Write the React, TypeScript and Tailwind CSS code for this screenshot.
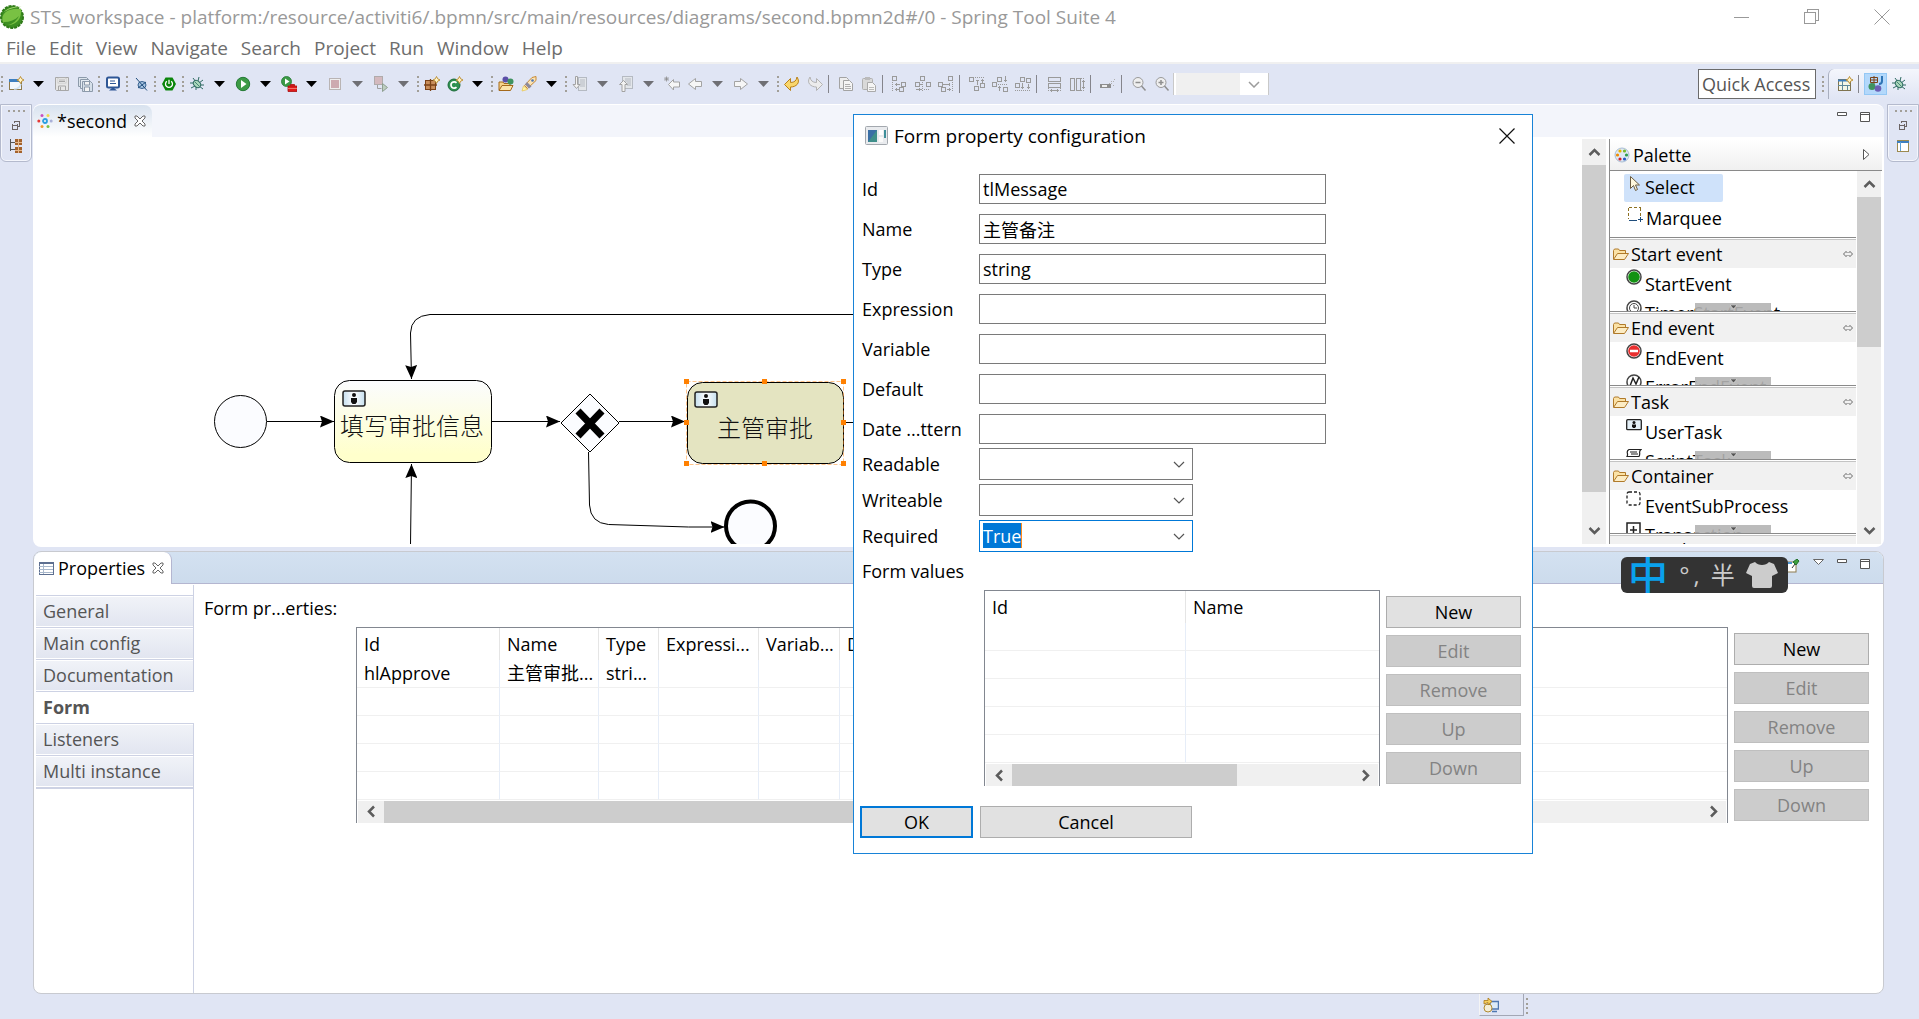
import type { ReactNode } from 'react';
import clsx from 'clsx';

const INK = '#9a9a9a';

interface IconProps {
  children: ReactNode;
  crisp?: boolean;
  className?: string;
}

function Icon({ children, crisp, className }: IconProps) {
  return (
    <svg
      viewBox="0 0 16 16"
      fill="none"
      shapeRendering={crisp ? 'crispEdges' : 'auto'}
      className={clsx('h-4 w-4 shrink-0', className)}
    >
      {children}
    </svg>
  );
}

const sparkle = <path d="M12.5 0.5l1.2 2.3 2.3 1.2-2.3 1.2-1.2 2.3-1.2-2.3L9 4l2.3-1.2z" fill="#fff3c4" stroke="#b8892b" strokeWidth="0.9" />;

const bug = (
  <>
    <path d="M4 2l3 4M10 1L9 5M1 7h4M2 12l4-2M7 14v-3M15 9h-4M14 13l-4-3M14 4l-4 3" stroke="#2f6b62" />
    <ellipse cx="8" cy="8" rx="4" ry="3" transform="rotate(40 8 8)" fill="#a9d8bb" stroke="#2f6b62" />
    <path d="M6 6l4 4" stroke="#2f6b62" strokeWidth="0.8" />
  </>
);

const box = (x: number, y: number, w = 5, h = 5) => (
  <rect x={x + 0.5} y={y + 0.5} width={w - 1} height={h - 1} stroke={INK} />
);

const icons: Record<string, ReactNode> = {
  New: (
    <Icon>
      <rect x="1.5" y="3.5" width="12" height="10" fill="#f2f8fd" stroke="#8d7a4c" />
      <rect x="1" y="3" width="10" height="3" fill="#3d7fc0" />
      <path d="M6 13c4 0 6-2 7-5" stroke="#cfe3f5" strokeWidth="1.5" />
      {sparkle}
    </Icon>
  ),
  Save: (
    <Icon>
      <path d="M1.5 1.5h13v13h-12l-1-1z" fill="#e6e6e6" stroke="#a7a7a7" />
      <rect x="4" y="2" width="8" height="5" fill="#f7f7f7" stroke="#bdbdbd" strokeWidth="0.7" />
      <path d="M4.5 14v-4h7v4M6.5 14v-3M5 4h6M5 5.500h6" stroke="#a7a7a7" />
    </Icon>
  ),
  'Save All': (
    <Icon>
      <path d="M1.500 1.500h8l2 2v7h-10z" fill="#dce4ec" stroke="#8c9aaa" />
      <path d="M3.500 3.500h8l2 2v7h-10z" fill="#e4ebf2" stroke="#8c9aaa" />
      <path d="M5.500 5.500h8l2 2v8h-10z" fill="#d5dfe9" stroke="#8c9aaa" />
      <path d="M7.500 6v3h5V6M7.500 15v-4h5v4" fill="#f4f4f4" stroke="#8c9aaa" />
    </Icon>
  ),
  Console: (
    <Icon>
      <rect x="2" y="1.500" width="12" height="10" rx="1.500" fill="#fff" stroke="#2e5796" strokeWidth="2" />
      <path d="M5 5h5M5 7.500h6" stroke="#2e5796" />
      <path d="M7 12h2l3 2.500H4z" fill="#2e5796" />
    </Icon>
  ),
  'Skip Breakpoints': (
    <Icon>
      <ellipse cx="9" cy="9" rx="4" ry="3.500" fill="#a8c5e2" stroke="#35618f" />
      <path d="M3 2l11 12.500M5 12l8-6" stroke="#1f4d7c" />
    </Icon>
  ),
  'Boot Dashboard': (
    <Icon>
      <path d="M4.500 1.500h7L15 8l-3.500 6.500h-7L1 8z" fill="#0b860b" />
      <path d="M5.800 5.200a3.500 3.500 0 104.400 0M8 3.800V8" stroke="#fff" strokeWidth="1.300" />
    </Icon>
  ),
  Debug: <Icon>{bug}</Icon>,
  Run: (
    <Icon>
      <circle cx="8" cy="8" r="6.700" fill="#3c9a45" stroke="#237a35" />
      <path d="M6 4l5.500 4L6 12z" fill="#fff" />
    </Icon>
  ),
  'External Tools': (
    <Icon>
      <circle cx="5.500" cy="5.500" r="5" fill="#3c9a45" stroke="#237a35" strokeWidth="0.800" />
      <path d="M4 2.500l4.500 3L4 8.500z" fill="#fff" />
      <path d="M7 10h9v5.500H7zM9.500 10V8.500h4V10" fill="#e01b1b" stroke="#a80f0f" strokeWidth="0.800" />
      <path d="M7 12.500h9" stroke="#ffb0a0" strokeWidth="0.600" />
    </Icon>
  ),
  Stop: (
    <Icon>
      <rect x="2.500" y="2.500" width="11" height="11" fill="#eee" stroke="#b9b4b4" />
      <rect x="4" y="4" width="8" height="8" fill="#cdaab0" />
    </Icon>
  ),
  Relaunch: (
    <Icon>
      <rect x="1.500" y="0.500" width="8" height="8" fill="#d4b9be" stroke="#b0abab" />
      <path d="M4.500 9v3.500h4" stroke="#a0a0a0" />
      <path d="M9.500 7.500l5 4-5 4z" fill="#bccdbf" stroke="#8f9f91" />
    </Icon>
  ),
  'New Package': (
    <Icon>
      <rect x="1.500" y="4.500" width="10" height="9" fill="#c98e5b" stroke="#7b4318" />
      <path d="M6.500 3v12M0 9h13" stroke="#7b4318" strokeWidth="1.300" />
      {sparkle}
    </Icon>
  ),
  'New Class': (
    <Icon>
      <circle cx="7" cy="9" r="6" fill="#2f9150" stroke="#1c6b39" />
      <path d="M9.500 6.800a3.200 3.200 0 100 4.400" stroke="#fff" strokeWidth="1.700" />
      {sparkle}
    </Icon>
  ),
  'Open Type': (
    <Icon>
      <path d="M1 14V6h4l1 1.500h6V14z" fill="#f8d58b" stroke="#a4691b" />
      <circle cx="7.500" cy="3.500" r="3" fill="#5b4fa8" />
      <circle cx="12.500" cy="5.500" r="3" fill="#3f9360" />
      <path d="M1 14.500l3-5h11l-2.500 5z" fill="#fce4a8" stroke="#a4691b" />
    </Icon>
  ),
  Search: (
    <Icon>
      <path d="M1 15l1.500-5 4 3.500z" fill="#fff6a8" stroke="#e8c65a" strokeWidth="0.800" />
      <path d="M3.500 9.500L11 1.500l4-1 0 4-8.500 8z" fill="#fbe3b5" stroke="#c78a35" />
      <path d="M4 8.500l4 4 2.500-2-4.500-4.500z" fill="#8c8a9c" />
      <circle cx="11.500" cy="4.500" r="1.300" fill="#4d74b0" />
    </Icon>
  ),
  'Next Annotation': (
    <Icon>
      <rect x="6.500" y="1.500" width="8" height="13" fill="#e3e6ea" stroke="#b5bac2" />
      <path d="M8 4h5M8 6h5M8 8h5M8 10h5" stroke="#b5bac2" />
      <path d="M3.500 0.500h2v8h2.500l-3.500 4-3.500-4h2.500z" fill="#f3f3f3" stroke="#a3a3a3" />
    </Icon>
  ),
  'Previous Annotation': (
    <Icon>
      <rect x="4.500" y="0.500" width="10" height="12" fill="#e3e6ea" stroke="#b5bac2" />
      <path d="M7 3h6M7 5h6M9 7h4M9 9h4" stroke="#b5bac2" />
      <path d="M4 15.500v-7H1.500l4-4 4 4H7v7z" fill="#f3f3f3" stroke="#a3a3a3" />
    </Icon>
  ),
  'Last Edit Location': (
    <Icon>
      <path d="M15.500 6v5h-6v3l-5-5.500 5-5v2.500z" fill="#f6f6f6" stroke="#a3a3a3" />
      <path d="M2.500 0.500v5M0 3h5M0.800 1.200l3.500 3.500M4.300 1.200L0.800 4.700" stroke="#8b8b8b" strokeWidth="0.800" />
    </Icon>
  ),
  Back: <Icon><path d="M14.500 5.500v5h-6v3L1.500 8l7-5.500v3z" fill="#f6f6f6" stroke="#a3a3a3" /></Icon>,
  Forward: <Icon><path d="M1.500 5.500v5h6v3l7-5.500-7-5.500v3z" fill="#f6f6f6" stroke="#a3a3a3" /></Icon>,
  Undo: <Icon><path d="M0.500 8.500l6-6v4c4 0 6-2 6.500-5.500 4 6-1 10-6.500 10v3.500z" fill="#f9d66c" stroke="#b98018" /></Icon>,
  Redo: <Icon><path d="M15.500 8.500l-6-6v4c-4 0-6-2-6.500-5.500-4 6 1 10 6.500 10v3.500z" fill="#ececec" stroke="#b3b3b3" /></Icon>,
  Copy: (
    <Icon>
      <path d="M1.500 1.500h7l2 2v9h-9z" fill="#eee" stroke="#a3a3a3" />
      <path d="M5.500 4.500h6l3 3v7h-9z" fill="#f5f5f5" stroke="#a3a3a3" />
      <path d="M7 8.500h5M7 10.500h6M7 12.500h6" stroke="#b0b0b0" />
    </Icon>
  ),
  Paste: (
    <Icon>
      <rect x="1.500" y="2.500" width="10" height="11" rx="1" fill="#d9d9d9" stroke="#b0b0b0" />
      <rect x="4" y="1" width="5" height="3" fill="#bbb" />
      <path d="M6.500 6.500h5l3 3v6h-8z" fill="#f5f5f5" stroke="#aaa" />
      <path d="M8 11.500h5M8 13.500h5" stroke="#bbb" />
    </Icon>
  ),
  'Align Left': <Icon crisp>{box(0, 0)}{box(9, 6)}{box(7, 11)}<path d="M0.500 6v10" stroke={INK} strokeDasharray="1 1" /><path d="M3 8.500h5M3 13.500h4" stroke={INK} /><path d="M4 7v3M4 12v3" stroke={INK} /></Icon>,
  'Align Center': <Icon crisp>{box(5, 0)}{box(0, 6)}{box(11, 6)}<path d="M7.500 6v10M9 13.500h6" stroke={INK} strokeDasharray="1 1" /><path d="M1 13.500h6M5 8.500h2M4.500 12v3" stroke={INK} /></Icon>,
  'Align Right': <Icon crisp>{box(10, 0)}{box(0, 6)}{box(3, 11)}<path d="M14.500 6v10" stroke={INK} strokeDasharray="1 1" /><path d="M5 8.500h7M9 13.500h4M11.500 7v3M11.500 12v3" stroke={INK} /></Icon>,
  'Align Top': <Icon crisp>{box(0, 1)}{box(5, 10)}{box(11, 7)}<path d="M6 1.500h10" stroke={INK} strokeDasharray="1 1" /><path d="M8.500 4v5M13.500 3v4M7 4.500h3M12 4.500h3" stroke={INK} /></Icon>,
  'Align Middle': <Icon crisp>{box(5, 1)}{box(0, 6)}{box(11, 11)}<path d="M6 8.500h10" stroke={INK} strokeDasharray="1 1" /><path d="M7.500 10v5M13.500 0v6M6 11.500h3M12 4.500h3" stroke={INK} /></Icon>,
  'Align Bottom': <Icon crisp>{box(5, 1)}{box(11, 2)}{box(0, 7)}<path d="M0 14.500h16" stroke={INK} strokeDasharray="1 1" /><path d="M7.500 7v6M13.500 8v5M6 11.500h3M12 11.500h3" stroke={INK} /></Icon>,
  'Match Width': <Icon crisp>{box(2, 1, 13, 5)}{box(2, 7, 13, 5)}<path d="M2.500 12v4M14.500 12v4" stroke={INK} strokeDasharray="1 1" /><path d="M4 14.500h9M5.500 13v3M11.500 13v3" stroke={INK} /></Icon>,
  'Match Height': <Icon crisp>{box(1, 2, 5, 13)}{box(7, 2, 5, 13)}<path d="M12 2.500h4M12 14.500h4" stroke={INK} strokeDasharray="1 1" /><path d="M14.500 4v9M13 5.500h3M13 11.500h3" stroke={INK} /></Icon>,
  Eraser: (
    <Icon crisp>
      <path d="M0 8h11v4H0z" fill="#8d8d8d" />
      <path d="M2 9h5v2H2z" fill="#eee" />
      <path d="M9 7.500h4M11 5.500h3M14 3.500h2M13 9.500h2" stroke="#b0b0b0" strokeDasharray="1 1" />
    </Icon>
  ),
  'Zoom Out': <Icon><circle cx="7" cy="6.500" r="5" fill="#efefef" stroke={INK} /><path d="M4.500 6.500h5M10.500 10l4 4.500" stroke="#8f8f8f" strokeWidth="1.500" /></Icon>,
  'Zoom In': <Icon><circle cx="7" cy="6.500" r="5" fill="#efefef" stroke={INK} /><path d="M4.500 6.500h5M7 4v5M10.500 10l4 4.500" stroke="#8f8f8f" strokeWidth="1.500" /></Icon>,
};

// '|' is a grip, '/' a separator, 'v' a drop-down arrow and '-' a disabled one
const toolbar = [
  'New', 'v', 'Save', 'Save All', '|', 'Console', '|', 'Skip Breakpoints', '|', 'Boot Dashboard', '|',
  'Debug', 'v', 'Run', 'v', 'External Tools', 'v', 'Stop', '-', 'Relaunch', '-', '|',
  'New Package', 'New Class', 'v', '|', 'Open Type', 'Search', 'v', '|',
  'Next Annotation', '-', 'Previous Annotation', '-', 'Last Edit Location', 'Back', '-', 'Forward', '-', '|',
  'Undo', 'Redo', '/', 'Copy', 'Paste', '/', 'Align Left', 'Align Center', 'Align Right', '/',
  'Align Top', 'Align Middle', 'Align Bottom', '/', 'Match Width', 'Match Height', '/', 'Eraser', '/',
  'Zoom Out', 'Zoom In',
];

function Grip({ narrow }: { narrow?: boolean }) {
  return (
    <span className={clsx('flex h-4 shrink-0 flex-col items-center justify-between', narrow ? 'w-1' : 'w-[5px]')}>
      {[0, 1, 2, 3].map((i) => (
        <span key={i} className="h-[2px] w-[2px] bg-[#a29f98]" />
      ))}
    </span>
  );
}

function ToolItem({ name }: { name: string }) {
  if (name === '|') return <Grip />;
  if (name === '/') return <span className="mr-[5px] ml-[2px] h-[18px] w-px shrink-0 bg-[#85858c]" />;
  if (name === 'v' || name === '-') {
    return (
      <button aria-label="More" className="flex h-6 w-[23px] shrink-0 items-center justify-center">
        <svg viewBox="0 0 11 6" className="h-[6px] w-[11px]">
          <path d="M0 0h11L5.500 6z" fill={name === 'v' ? '#000' : '#6f6f74'} />
        </svg>
      </button>
    );
  }
  return (
    <button aria-label={name} className="flex h-6 w-[23px] shrink-0 items-center justify-center">
      {icons[name]}
    </button>
  );
}

function TitleBar() {
  return (
    <header className="flex h-[34px] shrink-0 items-center">
      <svg viewBox="0 0 26 26" className="h-[26px] w-[26px]">
        <circle cx="12" cy="13" r="11" fill="#3d8f22" stroke="#2f7a18" strokeWidth="2" strokeDasharray="3 1" />
        <path d="M3 19C0 9 8 4 21 5c1 9-4 16-13 16 5-1 9-5 11-9-4 4-9 6-15 6z" fill="#79c143" />
        <path d="M4 8c4-5 12-6 18-5-5 0-12 1-18 5z" fill="#a5d96f" />
      </svg>
      <h1 className="ml-1 text-[19px] text-[#999]">
        STS_workspace - platform:/resource/activiti6/.bpmn/src/main/resources/diagrams/second.bpmn2d#/0 - Spring Tool Suite 4
      </h1>
      <div className="ml-auto flex items-center gap-[54px] pr-[29px]">
        <button aria-label="Minimize"><Icon crisp><path d="M0 8.500h15" stroke="#999" /></Icon></button>
        <button aria-label="Restore"><Icon crisp><path d="M0.500 3.500h11v11H0.500zM3.500 3V0.500h11v11H12" stroke="#999" /></Icon></button>
        <button aria-label="Close"><Icon><path d="M0.500 0.500l15 15M15.500 0.500l-15 15" stroke="#999" /></Icon></button>
      </div>
    </header>
  );
}

function MenuBar() {
  const menus = ['File', 'Edit', 'View', 'Navigate', 'Search', 'Project', 'Run', 'Window', 'Help'];
  return (
    <nav className="flex h-7 shrink-0 items-center gap-[13px] pl-[6px] text-[19px] text-[#6d6d6d]">
      {menus.map((m) => (
        <button key={m}>{m}</button>
      ))}
    </nav>
  );
}

function Toolbar() {
  return (
    <div className="flex h-[42px] shrink-0 items-center border-t-2 border-[#f0f0f0]">
      <Grip narrow />
      {toolbar.map((name, i) => (
        <ToolItem key={i} name={name} />
      ))}
      <div className="relative h-[22px] w-24 border-x border-[#c9c9c9] bg-white">
        <select aria-label="Zoom" disabled className="mx-[2px] h-full w-16 appearance-none bg-[#f0f0f0]" />
        <svg viewBox="0 0 12 7" className="absolute top-2 right-2 h-[7px] w-3" fill="none">
          <path d="M1 1l5 5 5-5" stroke="#9c9c9c" strokeWidth="1.500" />
        </svg>
      </div>
      <div className="ml-auto flex items-center">
        <input
          aria-label="Quick Access"
          placeholder="Quick Access"
          className="mr-1 h-[30px] w-[118px] border border-[#6b6b6b] bg-white px-[3px] outline-none placeholder:text-[#555]"
        />
        <Grip />
        <div className="ml-[3px] flex h-[30px] w-[91px] items-center rounded-tl-md border-l border-[#a9afc0] bg-gradient-to-b from-[#f4f6fc] to-[#e0e5f4] pl-2">
          <button aria-label="Open Perspective">
            <Icon>
              <rect x="1.500" y="3.500" width="12" height="11" fill="#f5f7e8" stroke="#7f7450" />
              <path d="M1 4.500h10" stroke="#3d7fc0" strokeWidth="2" />
              <path d="M5.500 5v9M1 9.500h12M10.500 9v5" stroke="#5f8a9c" />
              {sparkle}
            </Icon>
          </button>
          <span className="mx-[5px] h-[18px] w-px bg-[#85858c]" />
          <button aria-label="Java EE" className="flex h-[22px] w-[23px] items-center justify-center border border-[#94c8f5] bg-[#b3d8fb]">
            <Icon>
              <path d="M2.500 1.500h7v5h-7zM6 0v8M2 4h8" stroke="#7b4318" />
              <path d="M14 0v5c0 2-1 3-3 3" stroke="#2f74b5" strokeWidth="2" />
              <circle cx="4" cy="10.500" r="3.500" fill="#3f9360" />
              <circle cx="10" cy="12.500" r="3.300" fill="#6b5fb5" />
            </Icon>
          </button>
          <button aria-label="Debug perspective" className="ml-1"><Icon>{bug}</Icon></button>
        </div>
      </div>
    </div>
  );
}

function TrimStack({ children }: { children: ReactNode }) {
  return (
    <aside className="flex h-[58px] w-8 shrink-0 flex-col items-center rounded-b-md border border-[#b4bacd] shadow-[inset_0_0_0_1px_#f4f6fc]">
      <span className="mt-[5px] flex gap-[3px]">
        {[0, 1, 2, 3].map((i) => (
          <span key={i} className="h-[2px] w-[2px] bg-[#a29f98]" />
        ))}
      </span>
      <button aria-label="Restore view" className="mt-2">
        <svg viewBox="0 0 10 10" className="h-[10px] w-[10px]" fill="none" shapeRendering="crispEdges">
          <path d="M3 1.500h6M3.500 3V1M8.500 1v5H7M1 5h6M1.500 4v5h5V4" stroke="#6b6464" />
        </svg>
      </button>
      <button aria-label="Show view" className="mt-2">{children}</button>
    </aside>
  );
}

function ViewButtons() {
  return (
    <>
      <button aria-label="Minimize view">
        <svg viewBox="0 0 10 10" className="h-[10px] w-[10px]" fill="none"><path d="M0.500 0.500h9v3h-9z" fill="#fff" stroke="#555" /></svg>
      </button>
      <button aria-label="Maximize view">
        <svg viewBox="0 0 10 10" className="h-[10px] w-[10px]" fill="none"><path d="M0.500 0.500h9v9h-9zM0 2.500h10" fill="#fff" stroke="#555" /></svg>
      </button>
    </>
  );
}

function CloseTab() {
  return (
    <button aria-label="Close tab">
      <svg viewBox="0 0 12 12" className="h-3 w-3" fill="none">
        <path d="M1 1h2l3 3 3-3h2v2L8 6l3 3v2H9L6 8l-3 3H1V9l3-3-3-3z" fill="#fff" stroke="#666" />
      </svg>
    </button>
  );
}

const arrows = { up: 'M2 8l4-4 4 4', down: 'M2 4l4 4 4-4', left: 'M8 2L4 6l4 4', right: 'M4 2l4 4-4 4' };

function ScrollArrow({ dir }: { dir: keyof typeof arrows }) {
  const vertical = dir === 'up' || dir === 'down';
  return (
    <button
      aria-label={`Scroll ${dir}`}
      className={clsx('flex shrink-0 items-center justify-center', vertical ? 'h-[26px] w-6' : 'h-[22px] w-[26px]')}
    >
      <svg viewBox="0 0 12 12" className="h-[15px] w-[15px]" fill="none">
        <path d={arrows[dir]} stroke="#5c5c5c" strokeWidth="2" />
      </svg>
    </button>
  );
}

function VScroll({ thumb }: { thumb: string }) {
  return (
    <div className="flex w-6 shrink-0 flex-col bg-[#f0f0f0]">
      <ScrollArrow dir="up" />
      <div className="flex-1">
        <div className={clsx('w-6 bg-[#cdcdcd]', thumb)} />
      </div>
      <ScrollArrow dir="down" />
    </div>
  );
}

function HScroll({ thumb }: { thumb: string }) {
  return (
    <div className="mx-px mt-px flex h-[22px] items-center bg-[#f0f0f0]">
      <ScrollArrow dir="left" />
      <div className="flex h-full flex-1">
        <div className={clsx('h-full bg-[#cdcdcd]', thumb)} />
      </div>
      <ScrollArrow dir="right" />
    </div>
  );
}

const userBadge = (x: number, y: number) => (
  <g transform={`translate(${x} ${y})`}>
    <rect x="1" y="1" width="22" height="15" rx="2" fill="url(#badge)" stroke="#222" strokeWidth="1.500" />
    <circle cx="12" cy="5" r="2" fill="#111" />
    <path d="M9 8h6v4l-1.500 2h-3L9 12z" fill="#111" />
  </g>
);

function Diagram() {
  const handles = [[686, 381], [764, 381], [843, 381], [686, 422], [843, 422], [686, 463], [764, 463], [843, 463]];
  return (
    <svg className="h-full min-w-0 flex-1" fill="none">
      <defs>
        <linearGradient id="task" x1="0" y1="0" x2="0" y2="1">
          <stop offset="0" stopColor="#fbfcfe" />
          <stop offset="0.900" stopColor="#ffffcc" />
        </linearGradient>
        <linearGradient id="badge">
          <stop offset="0" stopColor="#c5dfee" />
          <stop offset="0.500" stopColor="#fff" />
          <stop offset="1" stopColor="#c5dfee" />
        </linearGradient>
        <marker id="head" viewBox="0 0 14 12" refX="14" refY="6" markerWidth="14" markerHeight="12" markerUnits="userSpaceOnUse" orient="auto">
          <path d="M0 0l14 6-14 6 2-6z" fill="#000" />
        </marker>
      </defs>
      <g transform="translate(-33 -139)">
        <g stroke="#000">
          <circle cx="240.500" cy="421.500" r="26" fill="#fbfcff" />
          <path d="M267 421.500h67" markerEnd="url(#head)" />
          <path d="M492 421.500h68" markerEnd="url(#head)" />
          <path d="M619 421.500h66" markerEnd="url(#head)" />
          <path d="M843 422.500h20" />
          <path d="M860 314.500H430Q411 316 410.500 333L411.500 379" markerEnd="url(#head)" />
          <path d="M410.500 546l1-82" markerEnd="url(#head)" />
          <path d="M588.500 452l1 53q1 18 19 19.500l80 2.500h36" markerEnd="url(#head)" />
          <rect x="334.500" y="380.500" width="157" height="82" rx="15" fill="url(#task)" />
          <path d="M590 394l29 29-29 29-29-29z" fill="#fbfcff" />
          <path d="M578 411l24 25M602 411l-24 25" strokeWidth="7" />
          <rect x="687.500" y="382.500" width="156" height="81" rx="15" fill="#e4e4c1" />
          <circle cx="750.500" cy="526" r="24.500" fill="#fbfcff" strokeWidth="4" />
        </g>
        {userBadge(342, 390)}
        {userBadge(694, 391)}
        <rect x="686.500" y="381.500" width="157" height="83" stroke="#ff8c1a" strokeOpacity="0.500" strokeDasharray="4 2" />
        {handles.map(([x, y]) => (
          <rect key={`${x}-${y}`} x={x - 2} y={y - 2} width="5" height="5" fill="#ff8000" />
        ))}
        <g className="font-light" fontSize="24" fill="#111" textAnchor="middle">
          <text x="412" y="435">填写审批信息</text>
          <text x="765" y="437">主管审批</text>
        </g>
      </g>
    </svg>
  );
}

const ring = <circle cx="8" cy="8" r="7" fill="#fff" stroke="#444" strokeWidth="1.500" />;

const paletteGroups = [
  {
    title: 'Start event',
    item: 'StartEvent',
    icon: <Icon>{ring}<circle cx="8" cy="8" r="5.800" fill="#129212" /></Icon>,
    next: 'TimerStartEvent',
    nextIcon: <Icon>{ring}<circle cx="8" cy="8" r="4.500" stroke="#444" /><path d="M8 5v3h3" stroke="#444" /></Icon>,
  },
  {
    title: 'End event',
    item: 'EndEvent',
    icon: <Icon>{ring}<circle cx="8" cy="8" r="5.800" fill="#e92f2f" /><path d="M4 8h8" stroke="#fff" strokeWidth="2.500" /></Icon>,
    next: 'ErrorEndEvent',
    nextIcon: <Icon>{ring}<path d="M4 12l3-8 3 6 3-7" stroke="#222" strokeWidth="1.500" /></Icon>,
  },
  {
    title: 'Task',
    item: 'UserTask',
    icon: (
      <Icon>
        <rect x="0.700" y="2.700" width="14.600" height="10" rx="1" fill="#e4f0f8" stroke="#222" strokeWidth="1.300" />
        <circle cx="8" cy="5.500" r="1.500" fill="#111" />
        <path d="M6 7.500h4v2l-1 1.500H7L6 9.500z" fill="#111" />
      </Icon>
    ),
    next: 'ScriptTask',
    nextIcon: <Icon><path d="M3 1.500h12c-3 2 0 4-2 7H1c2-3-2-5 2-7zM4 4h7M5 6h7" stroke="#222" strokeWidth="1.200" /></Icon>,
  },
  {
    title: 'Container',
    item: 'EventSubProcess',
    icon: <Icon><rect x="1" y="1" width="13" height="13" rx="2" stroke="#222" strokeWidth="1.300" strokeDasharray="3 2" /></Icon>,
    next: 'Transaction',
    nextIcon: <Icon><path d="M1 1h13v13H1zM7.500 4v8M4 8h7" stroke="#222" strokeWidth="1.500" /></Icon>,
  },
];

function GroupHeader({ title }: { title: string }) {
  return (
    <button className="flex h-[29px] w-full shrink-0 items-center border-t border-[#c4c4c4] bg-[#f1f1f1] pr-[3px] pl-[3px]">
      <Icon>
        <path d="M0.500 13V4.500l1-1.500h4l1 1.500h6V7" fill="#fbe2a6" stroke="#b07a2a" />
        <path d="M0.500 13.500l4-6h11l-4 6z" fill="#fcecc4" stroke="#b07a2a" />
      </Icon>
      <span className="ml-[2px]">{title}</span>
      <svg viewBox="0 0 10 8" className="ml-auto h-2 w-[10px]" fill="none">
        <path d="M3.500 1l-3 3 3 3M6.500 1l3 3-3 3M3.500 2.500h1M5.500 2.500h1M3.500 5.500h1M5.500 5.500h1" stroke="#666" />
      </svg>
    </button>
  );
}

function Palette() {
  return (
    <section className="ml-[3px] flex w-[273px] shrink-0 flex-col border-l border-[#8a8a8a]">
      <header className="flex h-8 shrink-0 items-center border-b border-[#8a8a8a] bg-gradient-to-b from-white to-[#f0f0f0] pl-1">
        <Icon>
          <circle cx="8" cy="8" r="7" fill="#dfe9f4" stroke="#a9bdd2" />
          <circle cx="6" cy="4" r="1.600" fill="#e8b400" />
          <circle cx="10.500" cy="4" r="1.600" fill="#76b82a" />
          <circle cx="3.500" cy="8" r="1.600" fill="#f08a00" />
          <circle cx="12.500" cy="8" r="1.600" fill="#2e9c4e" />
          <circle cx="6" cy="12" r="1.600" fill="#d3202a" />
          <circle cx="10.500" cy="12" r="1.600" fill="#2659c2" />
        </Icon>
        <h2 className="ml-[3px]">Palette</h2>
        <button aria-label="Collapse palette" className="mr-3 ml-auto">
          <svg viewBox="0 0 7 11" className="h-[11px] w-[7px]"><path d="M0.500 0.500L6 5.500l-5.500 5z" fill="#fff" stroke="#555" /></svg>
        </button>
      </header>
      <div className="flex min-h-0 flex-1 pr-px">
        <div className="mr-px min-w-0 flex-1 overflow-hidden">
          <div className="h-[67px] border-b border-[#8a8a8a] pt-[3px] pl-[14px]">
            <button className="flex h-7 w-[99px] rounded-xs bg-[#cfe2fa] pl-1">
              <Icon className="mt-[2px]"><path d="M2.500 0.500v12l3-3 2 5 2-1-2-4.500h4z" fill="#fff8dc" stroke="#6b5c40" /></Icon>
              <span className="ml-px leading-[27px]">Select</span>
            </button>
            <button className="mt-[3px] flex h-7 pl-1">
              <Icon crisp className="mt-[2px]">
                <path d="M0.500 1v11M1 0.500h12M12.500 1v8" stroke="#8d7020" strokeDasharray="3 2" />
                <path d="M1 13.500h8M10 12.500h5M12.500 10v5" stroke="#1f4d7c" />
              </Icon>
              <span className="ml-[2px] leading-[27px]">Marquee</span>
            </button>
          </div>
          {paletteGroups.map((g) => (
            <div key={g.title} className="flex h-[74px] flex-col border-b border-[#8a8a8a] pt-px">
              <GroupHeader title={g.title} />
              <button className="mt-px flex h-[31px] shrink-0 pl-4">
                {g.icon}
                <span className="ml-[3px] leading-[30px]">{g.item}</span>
              </button>
              <div className="relative flex min-h-0 flex-1 items-start overflow-hidden pl-4">
                {g.nextIcon}
                <span className="ml-[3px] leading-[27px]">{g.next}</span>
                <span className="absolute top-[3px] left-[85px] flex h-2 w-[76px] justify-center bg-[#b4b4b4]/90">
                  <svg viewBox="0 0 7 4" className="mt-[2px] h-1 w-[7px]"><path d="M0 0h7L3.500 4z" fill="#555" stroke="#fff" strokeWidth="0.500" /></svg>
                </span>
              </div>
            </div>
          ))}
          <div className="pt-px"><GroupHeader title="Boundary event" /></div>
        </div>
        <VScroll thumb="h-[150px]" />
      </div>
    </section>
  );
}

function EditorPane() {
  return (
    <section className="flex min-h-0 flex-1 basis-0 flex-col overflow-hidden rounded-lg border-t border-white bg-white">
      <div className="flex h-8 shrink-0 bg-[#f3f5fb]">
        <div className="flex w-[119px] items-center rounded-t-lg bg-gradient-to-b from-[#d8e2ef] to-white pl-1">
          <Icon>
            <circle cx="8" cy="8" r="2" stroke="#2c9fe0" strokeWidth="1.800" />
            <circle cx="5" cy="2.500" r="1.500" fill="#c94fc0" />
            <circle cx="11" cy="2.500" r="1.500" fill="#efd94a" />
            <circle cx="1.800" cy="8" r="1.500" fill="#e53935" />
            <circle cx="14.200" cy="8" r="1.500" fill="#a9b0d8" />
            <circle cx="5" cy="13.500" r="1.500" fill="#f29a2e" />
            <circle cx="11" cy="13.500" r="1.500" fill="#7cc142" />
          </Icon>
          <span className="mr-[7px] ml-1 text-black">*second</span>
          <CloseTab />
        </div>
        <div className="ml-auto flex items-start gap-[13px] pt-[7px] pr-[14px]">
          <ViewButtons />
        </div>
      </div>
      <div className="mt-[2px] flex min-h-0 flex-1 pr-[2px] pb-[3px]">
        <Diagram />
        <VScroll thumb="h-[327px]" />
        <Palette />
      </div>
    </section>
  );
}

interface GridProps {
  label: string;
  columns: { title: string; width?: string }[];
  rows: string[][];
  thumb: string;
}

function Grid({ label, columns, rows, thumb }: GridProps) {
  return (
    <div className="min-w-0 flex-1 border border-b-0 border-[#828790] bg-white">
      <table aria-label={label} className="w-full table-fixed border-separate border-spacing-0">
        <thead>
          <tr className="h-8">
            {columns.map((c, i) => (
              <th key={i} scope="col" className={clsx('overflow-hidden border-[#e5e5e5] pl-[7px] text-left font-normal whitespace-nowrap', c.width, c.width && 'border-r')}>
                {c.title}
              </th>
            ))}
          </tr>
        </thead>
        <tbody>
          {rows.map((row, i) => (
            <tr key={i} className="h-7">
              {columns.map((c, j) => (
                <td key={j} className={clsx('overflow-hidden border-b border-[#f0f0f0] pl-[7px] leading-[27px] whitespace-nowrap', c.width && 'border-r border-r-[#e6edf8]')}>
                  {row[j]}
                </td>
              ))}
            </tr>
          ))}
        </tbody>
      </table>
      <HScroll thumb={thumb} />
    </div>
  );
}

function RowButtons() {
  return (
    <div className="flex w-[135px] shrink-0 flex-col gap-[7px] pt-[6px]">
      {['New', 'Edit', 'Remove', 'Up', 'Down'].map((b, i) => (
        <button
          key={b}
          disabled={i > 0}
          className="h-8 border border-[#adadad] bg-[#e1e1e1] text-black disabled:border-[#bfbfbf] disabled:bg-[#ccc] disabled:text-[#838383]"
        >
          {b}
        </button>
      ))}
    </div>
  );
}

const formColumns = [
  { title: 'Id', width: 'w-[143px]' },
  { title: 'Name', width: 'w-[99px]' },
  { title: 'Type', width: 'w-[60px]' },
  { title: 'Expressi...', width: 'w-[100px]' },
  { title: 'Variab...', width: 'w-[81px]' },
  { title: 'Default', width: 'w-[81px]' },
  { title: '' },
];

function PropertiesPane() {
  const tabs = ['General', 'Main config', 'Documentation', 'Form', 'Listeners', 'Multi instance'];
  return (
    <section className="flex min-h-0 flex-1 basis-0 flex-col overflow-hidden rounded-lg border border-[#c8cad0] bg-white">
      <div className="flex h-8 shrink-0 bg-gradient-to-b from-[#d3e1f1] to-[#ccdbec]">
        <div className="flex w-[138px] items-center rounded-t-lg border-r border-[#b4b6d0] bg-white pl-1">
          <Icon crisp className="mr-1">
            <rect x="1" y="2" width="14" height="12" fill="#fff" stroke="#5d6f90" />
            <path d="M1 3h14" stroke="#5d6f90" strokeWidth="2" />
            <path d="M5.500 4v10M1 6.500h14M1 9.500h14M1 12.500h14" stroke="#a9b8cc" />
          </Icon>
          <span className="mr-[7px] text-black">Properties</span>
          <CloseTab />
        </div>
        <div className="flex flex-1 items-start justify-end gap-[13px] border-b border-[#b4b6d0] pt-[7px] pr-[13px]">
          <button aria-label="Pin view">
            <svg viewBox="0 0 16 14" className="h-[14px] w-4" fill="none">
              <rect x="1" y="3" width="11" height="10" fill="#fff" stroke="#8d7a4c" />
              <path d="M1 4h7" stroke="#4e95d0" strokeWidth="2" />
              <path d="M8 9l3-4" stroke="#333" />
              <path d="M9 3l4-3 2 2-3 4z" fill="#3da03d" stroke="#20702a" />
            </svg>
          </button>
          <button aria-label="View menu">
            <svg viewBox="0 0 11 6" className="h-[6px] w-[11px]"><path d="M0.500 0.500h10l-5 5z" fill="#fff" stroke="#666" /></svg>
          </button>
          <ViewButtons />
        </div>
      </div>
      <div className="flex flex-1 pt-px">
        <nav className="flex w-[160px] shrink-0 flex-col pl-[2px] text-[#555]">
          <span className="h-[10px] border-r border-[#cdd2e4]" />
          {tabs.map((t) => (
            <button
              key={t}
              className={clsx(
                'h-8 border-t border-[#cdd2e4] pl-[7px] text-left',
                t === 'Form' ? 'bg-white font-bold' : 'border-r bg-gradient-to-b from-[#f1f3f8] to-[#e1e5f0] shadow-[inset_0_1px_0_#fff,inset_0_-1px_0_#fff]',
              )}
            >
              {t}
            </button>
          ))}
          <span className="flex-1 border-t-2 border-r border-[#cdd2e4]" />
        </nav>
        <span className="ml-[10px] w-[152px] shrink-0 pt-[11px] text-black">Form pr...erties:</span>
        <div className="mt-[42px] mr-[14px] flex flex-1 items-start gap-[6px] text-black">
          <Grid
            label="Form properties"
            columns={formColumns}
            rows={[['hlApprove', '主管审批...', 'stri...'], [], [], [], []]}
            thumb="w-[700px]"
          />
          <RowButtons />
        </div>
      </div>
    </section>
  );
}

const textFields = [
  { label: 'Id', value: 'tlMessage' },
  { label: 'Name', value: '主管备注' },
  { label: 'Type', value: 'string' },
  { label: 'Expression', value: '' },
  { label: 'Variable', value: '' },
  { label: 'Default', value: '' },
  { label: 'Date ...ttern', value: '' },
];

function FormPropertyDialog() {
  return (
    <div role="dialog" aria-labelledby="dialog-title" className="absolute top-[114px] left-[853px] w-[680px] border border-[#1883d7] bg-white pb-[15px] text-black">
      <header className="flex h-[42px] items-center pr-[17px] pl-[11px]">
        <svg viewBox="0 0 24 20" className="h-5 w-6">
          <rect x="0.500" y="0.500" width="22" height="18" rx="1" fill="#e9ebee" stroke="#a3a8ae" />
          <rect x="3" y="4" width="9" height="12" fill="#3f8f8a" />
          <path d="M3 4h9l-9 12z" fill="#3a6fa5" />
          <rect x="14" y="4" width="4" height="5" fill="#fff" />
          <rect x="19" y="4" width="2" height="8" fill="#3f8f9a" />
          <rect x="14" y="11" width="4" height="5" fill="#fafafa" />
        </svg>
        <h2 id="dialog-title" className="ml-[5px] text-[19px]">Form property configuration</h2>
        <button aria-label="Close" className="ml-auto">
          <Icon><path d="M0.500 0.500l15 15M15.500 0.500l-15 15" stroke="#111" strokeWidth="1.200" /></Icon>
        </button>
      </header>
      <div className="mt-[17px] flex flex-col gap-[10px] pl-2">
        {textFields.map((f) => (
          <div key={f.label} className="flex h-[30px] items-center">
            <label htmlFor={f.label} className="w-[117px]">{f.label}</label>
            <input id={f.label} defaultValue={f.value} className="h-[30px] w-[347px] border border-[#7a7a7a] pl-[3px] outline-none" />
          </div>
        ))}
      </div>
      <div className="mt-1 flex flex-col gap-1 pl-2">
        {['Readable', 'Writeable', 'Required'].map((name) => {
          const active = name === 'Required';
          return (
            <div key={name} className="flex h-8 items-center">
              <label htmlFor={name} className="w-[117px]">{name}</label>
              <div className={clsx('relative h-8 w-[214px] border', active ? 'border-[#0078d7]' : 'border-[#7a7a7a]')}>
                {active && <span className="absolute top-[2px] left-[3px] h-[25px] w-[39px] border-r border-[#ff8c1a] bg-[#0078d7]" />}
                <select
                  id={name}
                  defaultValue={active ? 'True' : ''}
                  className={clsx('relative h-full w-full appearance-none bg-transparent pl-[3px] outline-none', active && 'text-white')}
                >
                  <option />
                  <option>True</option>
                  <option>False</option>
                </select>
                <svg viewBox="0 0 12 7" className="absolute top-3 right-[7px] h-[7px] w-3" fill="none">
                  <path d="M1 1l5 5 5-5" stroke="#555" strokeWidth="1.200" />
                </svg>
              </div>
            </div>
          );
        })}
      </div>
      <p className="mt-1 flex h-[30px] items-center pl-2">Form values</p>
      <div className="mt-1 flex items-start gap-[6px] pr-[11px] pl-[130px]">
        <Grid
          label="Form values"
          columns={[{ title: 'Id', width: 'w-[201px]' }, { title: 'Name' }]}
          rows={[[], [], [], [], []]}
          thumb="w-[225px]"
        />
        <RowButtons />
      </div>
      <footer className="mt-5 flex gap-[7px] pl-[6px]">
        <button className="h-8 w-[113px] border-2 border-[#0078d7] bg-[#e1e1e1]">OK</button>
        <button className="h-8 w-[212px] border border-[#adadad] bg-[#e1e1e1]">Cancel</button>
      </footer>
    </div>
  );
}

function ImeBar() {
  return (
    <div className="absolute top-[557px] right-[131px] flex h-9 w-[167px] items-center justify-between overflow-hidden rounded-md bg-[#333] pr-[10px] pl-[7px] text-[#ccc]">
      <span className="text-[40px] leading-9 font-medium text-[#0aa1ed]">中</span>
      <span className="flex gap-1 text-2xl leading-9"><span>°</span><span>,</span></span>
      <span className="text-2xl leading-9">半</span>
      <svg viewBox="0 0 32 28" className="h-7 w-8">
        <path d="M9 1c3 4 11 4 14 0l5 2 4 9-6 3v10q0 2-2 2H8q-2 0-2-2V15l-6-3 4-9z" fill="#ccc" />
      </svg>
    </div>
  );
}

export default function App() {
  return (
    <div className="relative flex h-screen flex-col overflow-hidden bg-white font-['Open_Sans','Noto_Sans_CJK_SC',sans-serif] text-lg leading-6">
      <TitleBar />
      <MenuBar />
      <div className="flex min-h-0 flex-1 flex-col bg-[#e0e5f4]">
        <Toolbar />
        <div className="flex min-h-0 flex-1 gap-px">
          <TrimStack>
            <Icon crisp>
              <path d="M2.500 1v12M3 4.500h4M3 11.500h4" stroke="#555" />
              <path d="M7 1h7v6H7zM7 9h7v6H7z" fill="#a3622c" />
              <path d="M10.500 1v14M7 4h7M7 12h7" stroke="#e6b98d" />
            </Icon>
          </TrimStack>
          <main className="flex min-w-0 flex-1 flex-col gap-1">
            <EditorPane />
            <PropertiesPane />
          </main>
          <div className="pl-[2px]">
            <TrimStack>
              <Icon crisp>
                <rect x="2.500" y="2.500" width="11" height="11" fill="#fff" stroke="#9c8a50" />
                <path d="M2 3.500h12" stroke="#3d7fc0" strokeWidth="2" />
                <path d="M5.500 4v9" stroke="#5aa0d8" />
              </Icon>
            </TrimStack>
          </div>
        </div>
        <footer className="flex h-[25px] shrink-0 items-start justify-end pr-[390px]">
          <div className="flex h-[22px] w-[45px] items-center border-r border-b border-l border-[#a3a7b5] border-l-[#f4f4f4] pl-[3px]">
            <Icon>
              <rect x="7" y="4.500" width="8.500" height="7.500" fill="#dceaf8" stroke="#4f77b0" strokeWidth="1.500" />
              <path d="M9 14.500h5" stroke="#4f77b0" strokeWidth="1.500" />
              <circle cx="5" cy="11" r="4" fill="#f4eed8" stroke="#b08a30" />
              <path d="M1 7V3.500h4V1l4 3.500L5 8V5.500z" fill="#f7cf5e" stroke="#a87718" strokeWidth="0.800" />
            </Icon>
          </div>
          <span className="mt-1"><Grip /></span>
        </footer>
      </div>
      <FormPropertyDialog />
      <ImeBar />
    </div>
  );
}
